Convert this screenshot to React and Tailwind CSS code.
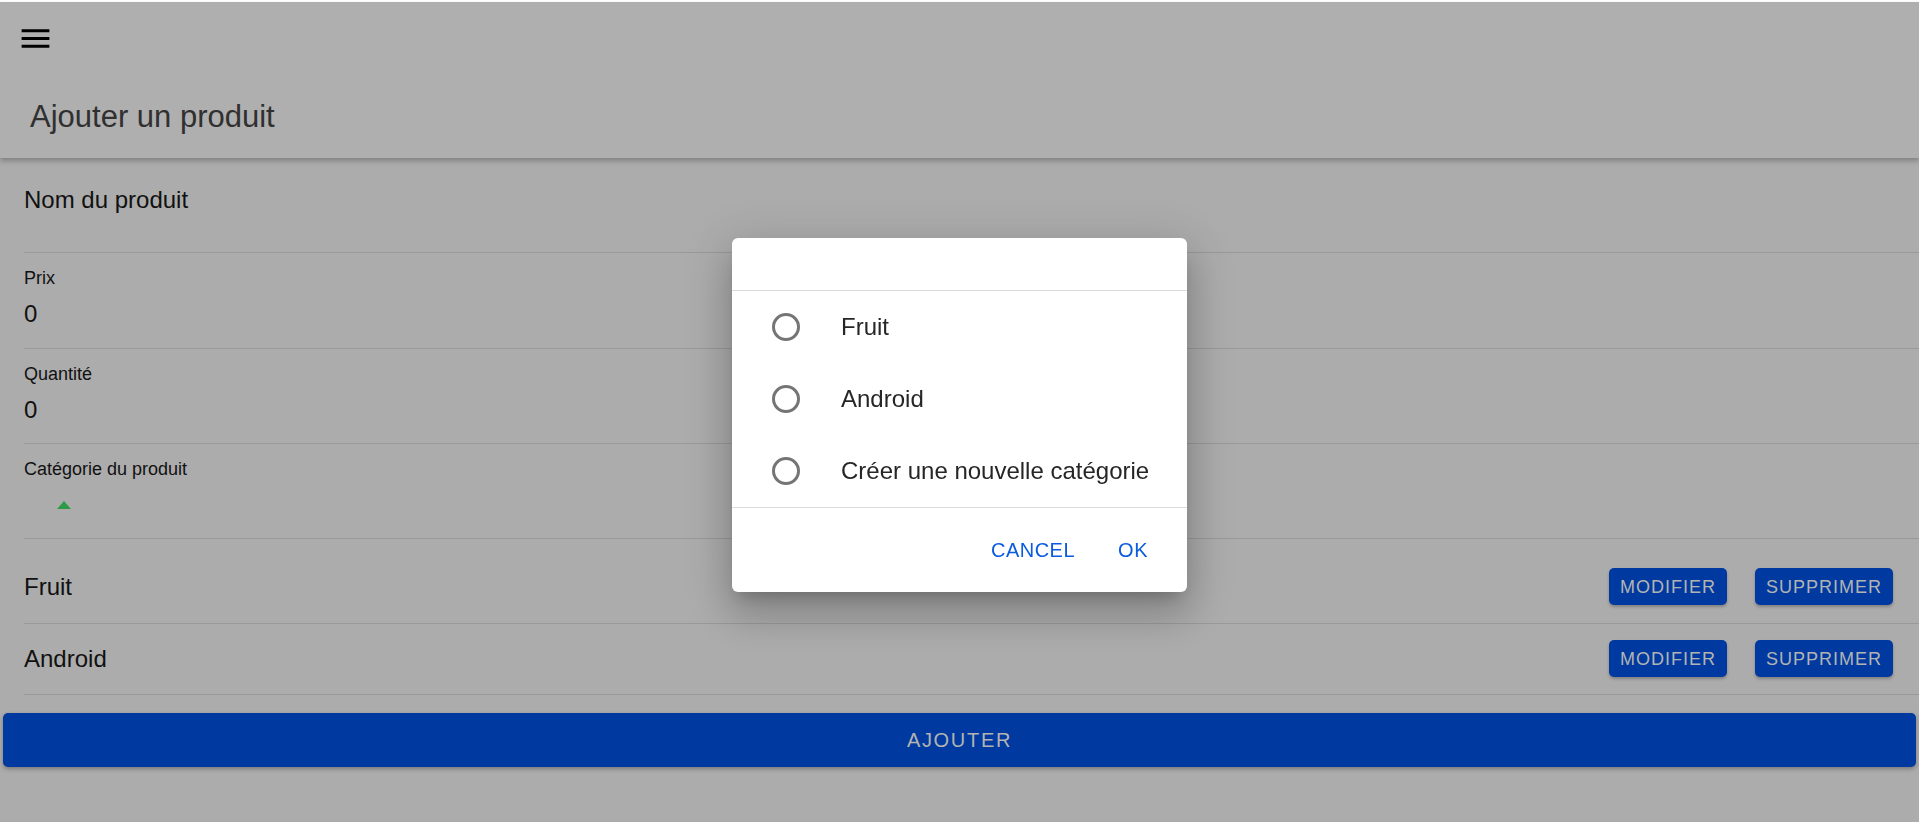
import React from "react";

const font = { fontFamily: '"Liberation Sans", Arial, sans-serif' };

const categories = ["Fruit", "Android"];
const choices = ["Fruit", "Android", "Créer une nouvelle catégorie"];

const ActionButton = ({ children }) => (
  <button className="h-[37px] px-[11px] rounded-[5px] bg-[#003aa0] text-[#b3b3b3] text-[18px] leading-none tracking-[1px] shadow-[0_2px_3px_rgba(0,0,0,0.25)]">
    {children}
  </button>
);

const App = () => {
  return (
    <div className="min-h-screen w-full bg-[#acacac] relative overflow-hidden" style={font}>
      {/* top white strip */}
      <div className="h-[2px] bg-white"></div>

      {/* Header */}
      <div className="bg-[#afafaf] pt-[18px] pb-[23px] shadow-[0_3px_5px_rgba(0,0,0,0.25)] relative z-10">
        <svg className="ml-[17px] block" width="37" height="37" viewBox="0 0 24 24" fill="#000">
          <path d="M3 18h18v-2H3v2zm0-5h18v-2H3v2zm0-7v2h18V6H3z" />
        </svg>
        <h1 className="mt-[42px] pl-[30px] text-[31px] leading-[36px] text-[#303030]">Ajouter un produit</h1>
      </div>

      {/* Form */}
      <div className="ml-[24px]">
        <div className="pt-[28px] pb-[38px] border-b border-[#999]">
          <div className="text-[24px] leading-[28px] text-[#111]">Nom du produit</div>
        </div>

        <div className="pt-[15px] pb-[20px] border-b border-[#999]">
          <div className="text-[18px] leading-[20px] text-[#111]">Prix</div>
          <div className="mt-[12px] text-[24px] leading-[28px] text-[#111]">0</div>
        </div>

        <div className="pt-[15px] pb-[19px] border-b border-[#999]">
          <div className="text-[18px] leading-[20px] text-[#111]">Quantité</div>
          <div className="mt-[12px] text-[24px] leading-[28px] text-[#111]">0</div>
        </div>

        <div className="pt-[15px] pb-[29px] border-b border-[#999]">
          <div className="text-[18px] leading-[20px] text-[#111]">Catégorie du produit</div>
          <div className="mt-[22px] ml-[33px] w-0 h-0 border-l-[7px] border-r-[7px] border-b-[8px] border-l-transparent border-r-transparent border-b-[#2e9a48]"></div>
        </div>

        {categories.map((c, i) => (
          <div
            key={c}
            className={
              i === 0
                ? "flex items-center justify-between pt-[29px] pb-[18px] pr-[26px] border-b border-[#999]"
                : "flex items-center justify-between pt-[16px] pb-[17px] pr-[26px] border-b border-[#999]"
            }
          >
            <span className="text-[24px] leading-[28px] text-[#111]">{c}</span>
            <div className="flex gap-[28px]">
              <ActionButton>MODIFIER</ActionButton>
              <ActionButton>SUPPRIMER</ActionButton>
            </div>
          </div>
        ))}
      </div>

      <div className="mt-[18px] mx-[3px]">
        <button className="w-full h-[54px] rounded-[5px] bg-[#003aa0] text-[#b3b3b3] text-[20px] tracking-[1.7px] shadow-[0_2px_4px_rgba(0,0,0,0.3)]">
          AJOUTER
        </button>
      </div>

      {/* Dialog */}
      <div className="fixed inset-0 flex items-center justify-center pt-[7px] z-20">
        <div className="w-[455px] bg-white rounded-[6px] shadow-[0_11px_15px_-7px_rgba(0,0,0,0.2),0_24px_38px_3px_rgba(0,0,0,0.14),0_9px_46px_8px_rgba(0,0,0,0.12)]">
          <div className="h-[53px] border-b border-[#dcdcdc]"></div>
          {choices.map((c) => (
            <div key={c} className="h-[72px] flex items-center pl-[40px]">
              <div className="w-[28px] h-[28px] rounded-full border-[3px] border-[#757575]"></div>
              <span className="ml-[41px] text-[24px] text-[#262626]">{c}</span>
            </div>
          ))}
          <div className="h-[85px] border-t border-[#dcdcdc] flex items-center justify-end pr-[39px] gap-[43px]">
            <button className="text-[20px] tracking-[0.5px] text-[#0a5be0]">CANCEL</button>
            <button className="text-[20px] tracking-[0.5px] text-[#0a5be0]">OK</button>
          </div>
        </div>
      </div>
    </div>
  );
};

export default App;
